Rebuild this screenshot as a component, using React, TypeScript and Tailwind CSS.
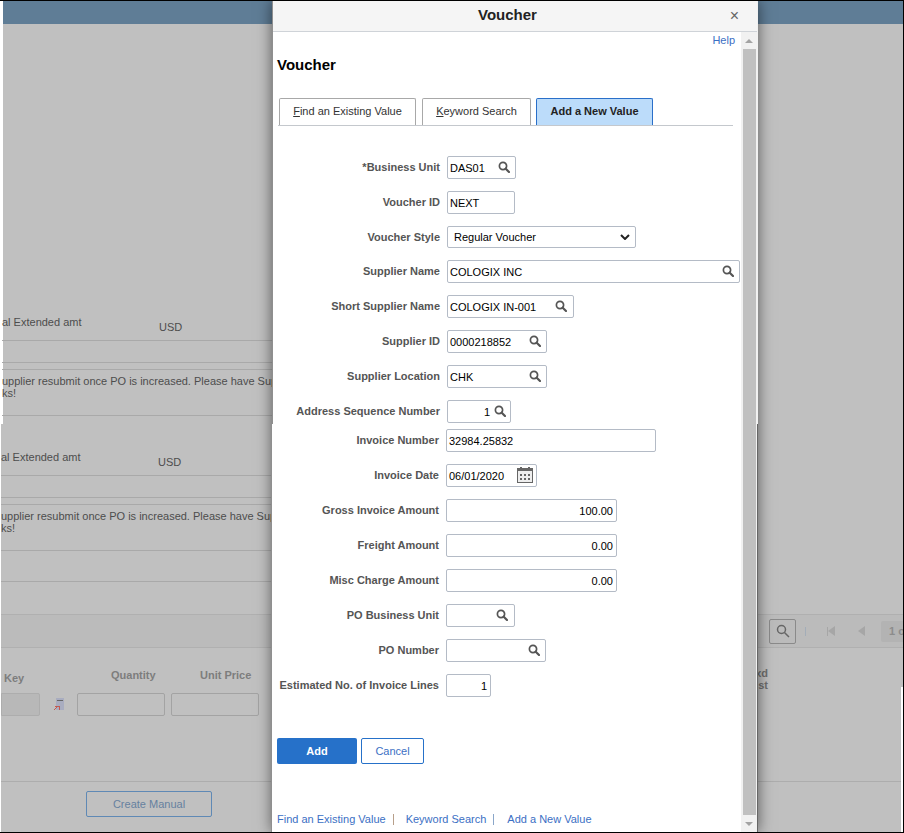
import { ReactNode } from 'react';

const link = 'text-[#3b6fc4]';

function SearchIcon({ className = '' }: { className?: string }) {
  return (
    <svg viewBox="0 0 12 12" className={`h-3 w-3 ${className}`} fill="none">
      <circle cx="5" cy="5" r="3.6" stroke="#555" strokeWidth="1.7" />
      <path d="M7.7 7.7 11 11" stroke="#555" strokeWidth="2.2" strokeLinecap="round" />
    </svg>
  );
}

function CalendarIcon() {
  return (
    <svg viewBox="0 0 16 16" className="h-4 w-4" shapeRendering="crispEdges">
      <rect x="0.5" y="1.5" width="15" height="14" fill="#eee" stroke="#666" />
      <rect x="0" y="1" width="16" height="3" fill="#666" />
      <rect x="3" y="0" width="2" height="2" fill="#666" />
      <rect x="11" y="0" width="2" height="2" fill="#666" />
      {[3, 7, 11].map((x) => (
        <g key={x} fill="#666">
          <rect x={x} y="7" width="2" height="2" />
          <rect x={x} y="11" width="2" height="2" />
        </g>
      ))}
    </svg>
  );
}

function Field({ label, width, value, right, icon, pad = 0 }: { label: string; width: string; value?: string; right?: boolean; icon?: ReactNode; pad?: number }) {
  return (
    <div className="mb-3 flex h-[23px] items-center">
      <div className="w-[167px] whitespace-nowrap pb-px text-right text-[11px] font-bold text-[#555]">{label}</div>
      <div className={`ml-[7px] flex h-[23px] shrink-0 items-center rounded-[2px] border border-[#b4bbc6] bg-white pl-[2px] pr-[3px] text-[11px] text-black ${width}`}>
        <span className={`flex-1 pt-0.5 ${right ? 'text-right' : ''}`}>{value}</span>
        {icon && <span className="ml-1 flex shrink-0 items-center pb-0.5 pr-[1px]" style={{ marginRight: pad }}>{icon}</span>}
      </div>
    </div>
  );
}

function BgSection() {
  return (
    <div className="h-[135px] w-[300px] text-[11px] text-[#4d4d4d]">
      <div className="flex h-[52px] border-b border-[#a9a9a9]">
        <div className="w-[157px] pt-[27px] leading-3">al Extended amt</div>
        <div className="pt-[32px] leading-3">USD</div>
      </div>
      <div className="h-[22px] border-b border-[#a9a9a9]" />
      <div className="h-[7px] border-b border-[#a9a9a9]" />
      <div className="h-[46px] border-b border-[#a9a9a9] pt-[5px] leading-3">
        <div className="whitespace-nowrap">upplier resubmit once PO is increased. Please have Supplier</div>
        <div>ks!</div>
      </div>
    </div>
  );
}

function Scrollbar({ top, bottom }: { top?: boolean; bottom?: boolean }) {
  return (
    <div className="flex w-[16px] shrink-0 flex-col bg-[#f1f1f1]">
      {top && (
        <div className="flex h-[17px] shrink-0 items-center justify-center">
          <div className="h-0 w-0 border-x-[4px] border-b-[4px] border-x-transparent border-b-[#a3a3a3]" />
        </div>
      )}
      <div className="ml-[2px] w-[13px] flex-1 bg-[#c0c0c0]" />
      {bottom && (
        <div className="flex h-[17px] shrink-0 items-center justify-center">
          <div className="h-0 w-0 border-x-[4px] border-t-[4px] border-x-transparent border-t-[#a3a3a3]" />
        </div>
      )}
    </div>
  );
}

function Modal() {
  return (
    <div className="absolute left-[272px] top-0 w-[486px] font-['Liberation_Sans',Arial,sans-serif] shadow-[0_0_14px_rgba(0,0,0,0.55)]">
      {/* top half */}
      <div className="flex h-[423px] flex-col border-l border-l-[#8f8f8f] border-r border-r-[#f1f1f1] bg-white">
        <div className="relative flex h-[31px] shrink-0 items-center justify-center border-b border-[#cfd3d8] bg-[#f5f5f5] pb-[2px] pr-[15px] text-[15px] font-bold text-[#222]">
          Voucher
          <span className="absolute right-[18px] top-[7px] text-[16px] font-normal leading-4 text-[#666]">×</span>
        </div>
        <div className="flex min-h-0 flex-1">
          <div className="min-w-0 flex-1 overflow-hidden">
            <div className={`pr-[6px] text-right text-[11px] leading-4 ${link}`}>Help</div>
            <div className="pl-[4px] pt-[7px] text-[15px] font-bold leading-5 text-black">Voucher</div>
            <div className="ml-[5px] mr-[8px] mt-[23px] flex h-[28px] items-end border-b border-[#c4c8cd] pl-px">
              <div className="flex h-[27px] w-[137px] items-center justify-center rounded-t-[2px] border border-b-0 border-[#a8a8a8] bg-white pb-px text-[11px] text-[#333]"><span><u>F</u>ind an Existing Value</span></div>
              <div className="ml-[6px] flex h-[27px] w-[109px] items-center justify-center rounded-t-[2px] border border-b-0 border-[#a8a8a8] bg-white pb-px text-[11px] text-[#333]"><span><u>K</u>eyword Search</span></div>
              <div className="ml-[5px] flex h-[27px] w-[117px] items-center justify-center rounded-t-[2px] border border-b-0 border-[#2a6fc9] bg-[#bcdcfa] pb-px text-[11px] font-bold text-[#222]">Add a New Value</div>
            </div>
            <div className="pt-[30px]">
              <Field label="*Business Unit" width="w-[69px]" value="DAS01" icon={<SearchIcon />} pad={1} />
              <Field label="Voucher ID" width="w-[68px]" value="NEXT" />
              <div className="mb-3 flex h-[22px] items-center">
                <div className="w-[167px] text-right text-[11px] font-bold text-[#555]">Voucher Style</div>
                <div className="ml-[7px] flex h-[22px] w-[189px] items-center justify-between rounded-[2px] border border-[#b4bbc6] bg-white pl-[6px] pr-[5px] text-[11px] text-black">
                  Regular Voucher
                  <svg viewBox="0 0 10 6" className="h-[6px] w-[10px]" fill="none"><path d="M1 1l4 4 4-4" stroke="#222" strokeWidth="2" /></svg>
                </div>
              </div>
              <Field label="Supplier Name" width="w-[293px]" value="COLOGIX INC" icon={<SearchIcon />} pad={1} />
              <Field label="Short Supplier Name" width="w-[127px]" value="COLOGIX IN-001" icon={<SearchIcon />} pad={2} />
              <Field label="Supplier ID" width="w-[100px]" value="0000218852" icon={<SearchIcon />} pad={1} />
              <Field label="Supplier Location" width="w-[100px]" value="CHK" icon={<SearchIcon />} pad={1} />
              <Field label="Address Sequence Number" width="w-[64px]" value="1" right icon={<SearchIcon />} />
            </div>
          </div>
          <Scrollbar top />
        </div>
      </div>
      {/* bottom half, the screenshot is stitched here and sits one pixel further left */}
      <div className="-ml-px flex h-[408px] border-l border-l-[#8f8f8f] border-r border-r-[#666] bg-white">
        <div className="min-w-0 flex-1 overflow-hidden pt-[5px]">
          <Field label="Invoice Number" width="w-[210px]" value="32984.25832" />
          <Field label="Invoice Date" width="w-[91px]" value="06/01/2020" icon={<CalendarIcon />} pad={-1} />
          <Field label="Gross Invoice Amount" width="w-[171px]" value="100.00" right />
          <Field label="Freight Amount" width="w-[171px]" value="0.00" right />
          <Field label="Misc Charge Amount" width="w-[171px]" value="0.00" right />
          <Field label="PO Business Unit" width="w-[69px]" icon={<SearchIcon />} pad={2} />
          <Field label="PO Number" width="w-[100px]" icon={<SearchIcon />} pad={1} />
          <Field label="Estimated No. of Invoice Lines" width="w-[45px]" value="1" right />
          <div className="ml-[5px] mt-[41px] flex h-[26px] gap-[4px] text-[11px]">
            <div className="flex w-[80px] items-center justify-center rounded-[2px] bg-[#2671c9] font-bold text-white">Add</div>
            <div className="flex w-[63px] items-center justify-center rounded-[2px] border border-[#2671c9] bg-white text-[#3b6fc4]">Cancel</div>
          </div>
          <div className={`ml-[5px] mt-[47px] flex items-center text-[11px] leading-4 ${link}`}>
            <span>Find an Existing Value</span>
            <span className="ml-[7px] h-[11px] w-px bg-[#b79f8a]" />
            <span className="ml-[12px]">Keyword Search</span>
            <span className="ml-[7px] h-[11px] w-px bg-[#8aa6c9]" />
            <span className="ml-[13px]">Add a New Value</span>
          </div>
        </div>
        <Scrollbar bottom />
      </div>
    </div>
  );
}

export default function App() {
  return (
    <div className="relative h-[833px] w-[904px] overflow-hidden border-y border-r border-black bg-white font-['Liberation_Sans',Arial,sans-serif]">
      {/* page behind the dialog */}
      <div className="h-[423px] overflow-hidden pl-[3px]">
        <div className="h-full bg-[#c0c0c0]">
          <div className="h-[23px] bg-[#5f7d96]" />
          <div className="-ml-px pt-[265px]">
            <BgSection />
          </div>
        </div>
      </div>
      <div className="h-[408px] overflow-hidden pl-px">
        <div className="h-full bg-[#c0c0c0]">
          <BgSection />
          <div className="h-[23px] w-[300px] border-b border-[#a9a9a9]" />
          <div className="h-[32px] w-[300px]" />
          <div className="flex h-[34px] items-center justify-end overflow-hidden border-y border-[#b0b0b0] bg-[#bbbbbb]">
            <div className="flex h-[25px] w-[27px] shrink-0 items-center justify-center rounded-[2px] border border-[#8a8a8a]">
              <svg viewBox="0 0 14 14" className="h-[14px] w-[14px]" fill="none"><circle cx="5.5" cy="5.5" r="4" stroke="#666" strokeWidth="1.5" /><path d="M8.5 8.5 13 13" stroke="#666" strokeWidth="1.5" /></svg>
            </div>
            <div className="ml-[9px] h-[9px] w-px bg-[#a3adb8]" />
            <div className="ml-[21px] flex items-center"><div className="h-[9px] w-px bg-[#a6a6a6]" /><div className="h-0 w-0 border-y-[5px] border-r-[7px] border-y-transparent border-r-[#a6a6a6]" /></div>
            <div className="ml-[23px] h-0 w-0 border-y-[5px] border-r-[7px] border-y-transparent border-r-[#a6a6a6]" />
            <div className="ml-[16px] flex h-[21px] w-[22px] shrink-0 items-center overflow-hidden whitespace-nowrap rounded-l-[2px] bg-[#b3b3b3] pl-2 text-[11px] font-bold text-[#8c8c8c]">1 o</div>
          </div>
          <div className="relative h-[134px] border-b border-[#adadad]">
            <div className="flex h-[36px] w-[300px] pt-[19px] text-[11px] font-bold leading-[17px] text-[#7d7d7d]">
              <div className="w-[110px] pl-[3px] pt-[3px]">Key</div>
              <div className="w-[89px]">Quantity</div>
              <div>Unit Price</div>
            </div>
            <div className="absolute left-[754px] top-[19px] w-[13px] text-right text-[11px] font-bold leading-3 text-[#6f6f6f]">xd<br />st</div>
            <div className="mt-[9px] flex h-[23px] w-[300px] items-center">
              <div className="h-full w-[39px] rounded-r-[2px] border border-[#adadad] bg-[#b8b8b8]" />
              <svg viewBox="0 0 10 13" className="ml-[14px] h-[13px] w-[10px]" shapeRendering="crispEdges">
                <rect x="2" y="0" width="8" height="12" fill="#a9adc0" />
                <rect x="3" y="2" width="6" height="1" fill="#666" />
                <path d="M0 12l4-4M1 8h4v4" stroke="#c45a50" fill="none" />
              </svg>
              <div className="ml-[13px] h-full w-[88px] rounded-[2px] border border-[#a3a3a3]" />
              <div className="ml-[6px] h-full w-[88px] rounded-[2px] border border-[#a3a3a3]" />
            </div>
          </div>
          <div className="flex w-[300px] pl-[85px] pt-[9px]">
            <div className="flex h-[26px] w-[126px] items-center justify-center rounded-[2px] border border-[#5f89b5] text-[11px] text-[#66809f]">Create Manual</div>
          </div>
        </div>
      </div>
      <Modal />
      {/* white sliver at the stitched edge */}
      <div className="absolute bottom-0 right-0 top-[686px] w-[2px] bg-white" />
    </div>
  );
}
